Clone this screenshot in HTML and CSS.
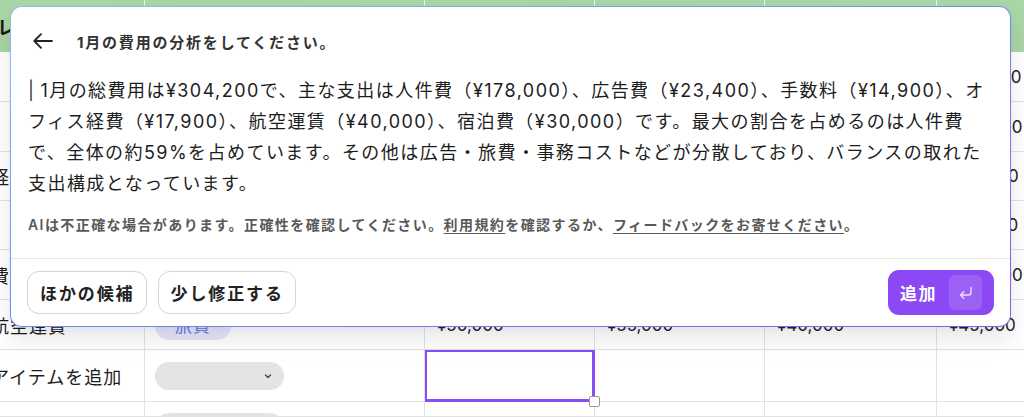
FILE: index.html
```html
<!DOCTYPE html>
<html lang="ja">
<head>
    <meta charset="UTF-8">
    <meta name="viewport" content="width=device-width, initial-scale=1.0">
    <title>費用シート</title>
    <link rel="stylesheet" href="styles.css">
</head>
<body>
    <div class="sheet">
        <div class="cell head first">レシート</div>
        <div class="cell head"></div>
        <div class="cell head"></div>
        <div class="cell head"></div>
        <div class="cell head"></div>
        <div class="cell head"></div>

        <div class="cell first"></div>
        <div class="cell"></div>
        <div class="cell value"></div>
        <div class="cell value"></div>
        <div class="cell value"></div>
        <div class="cell value">¥178,000</div>

        <div class="cell first"></div>
        <div class="cell"></div>
        <div class="cell value"></div>
        <div class="cell value"></div>
        <div class="cell value"></div>
        <div class="cell value">¥124,000</div>

        <div class="cell first">経費</div>
        <div class="cell"></div>
        <div class="cell value"></div>
        <div class="cell value"></div>
        <div class="cell value"></div>
        <div class="cell value">¥115,000</div>

        <div class="cell first"></div>
        <div class="cell"></div>
        <div class="cell value"></div>
        <div class="cell value"></div>
        <div class="cell value"></div>
        <div class="cell value">¥113,550</div>

        <div class="cell first">費用</div>
        <div class="cell"></div>
        <div class="cell value"></div>
        <div class="cell value"></div>
        <div class="cell value"></div>
        <div class="cell value">¥130,000</div>

        <div class="cell first">航空運賃</div>
        <div class="cell"><span class="tag">旅費</span></div>
        <div class="cell value">¥50,000</div>
        <div class="cell value">¥55,000</div>
        <div class="cell value">¥40,000</div>
        <div class="cell value">¥45,000</div>

        <div class="cell first">アイテムを追加</div>
        <div class="cell"><span class="select"><svg width="10" height="10" viewBox="0 0 10 10"><path d="M2.5 4 L5 6.5 L7.5 4" fill="none" stroke="#444" stroke-width="1.3" stroke-linecap="round" stroke-linejoin="round"/></svg></span></div>
        <div class="cell selected"><span class="handle"></span></div>
        <div class="cell"></div>
        <div class="cell"></div>
        <div class="cell"></div>

        <div class="cell first"></div>
        <div class="cell"><span class="select"></span></div>
        <div class="cell"></div>
        <div class="cell"></div>
        <div class="cell"></div>
        <div class="cell"></div>
    </div>

    <div class="dialog">
        <div class="dialog-body">
            <div class="dialog-header">
                <button class="back" aria-label="戻る">
                    <svg width="20" height="16" viewBox="0 0 20 16"><path d="M19 8 H1.5 M8 1.2 L1.3 8 L8 14.8" fill="none" stroke="#222" stroke-width="1.8" stroke-linecap="round" stroke-linejoin="round"/></svg>
                </button>
                <span class="prompt">1月の費用の分析をしてください。</span>
            </div>

            <p class="answer"><span class="caret">|</span>1月の総費用は¥304,200で、主な支出は人件費（¥178,000）、広告費（¥23,400）、手数料（¥14,900）、オフィス経費（¥17,900）、航空運賃（¥40,000）、宿泊費（¥30,000）です。最大の割合を占めるのは人件費で、全体の約59%を占めています。その他は広告・旅費・事務コストなどが分散しており、バランスの取れた支出構成となっています。</p>

            <p class="notice">AIは不正確な場合があります。正確性を確認してください。<a href="#">利用規約</a>を確認するか、<a href="#">フィードバックをお寄せください</a>。</p>
        </div>

        <div class="dialog-footer">
            <button class="btn">ほかの候補</button>
            <button class="btn">少し修正する</button>
            <button class="btn-add">
                追加
                <span class="key">
                    <svg width="18" height="18" viewBox="0 0 18 18"><path d="M14 3.5 V8.5 A2.5 2.5 0 0 1 11.5 11 H3.5 M6.8 7.7 L3.5 11 L6.8 14.3" fill="none" stroke="#fff" stroke-opacity="0.8" stroke-width="1.4" stroke-linecap="round" stroke-linejoin="round"/></svg>
                </span>
            </button>
        </div>
    </div>
</body>
</html>
```

FILE: styles.css
```css
body {
    margin: 0;
    font-family: "Inter", "Noto Sans CJK JP", sans-serif;
    color: #1d1d1d;
    background: #fff;
    overflow: hidden;
    height: 417px;
}

.sheet {
    display: grid;
    grid-template-columns: 175px 280px 170px 170px 172px 172px;
    grid-template-rows: 52px 50px 50px 49px 49px 50px 50px 52px 15px;
    margin-left: -30px;
    width: 1139px;
    font-size: 17px;
    overflow: hidden;
}

.cell {
    box-sizing: border-box;
    display: flex;
    align-items: center;
    padding-left: 12px;
    border-right: 1px solid #e2e2e2;
    border-bottom: 1px solid #e2e2e2;
    white-space: nowrap;
    overflow: hidden;
    position: relative;
}

.cell.first {
    padding-left: 21px;
    font-size: 18px;
    letter-spacing: 1px;
}

.cell.head {
    background: #a9d6a6;
    border-right-color: rgba(255, 255, 255, 0.75);
    border-bottom: none;
    font-weight: 700;
    font-size: 19px;
}

.cell.head.first {
    padding-left: 27px;
}

.cell.value {
    color: #222;
}

.tag {
    margin-left: -2px;
    padding: 3px 20px;
    border-radius: 14px;
    background: #e4e6fb;
    color: #6d72e4;
    letter-spacing: 1px;
}

.select {
    box-sizing: border-box;
    margin-left: -2px;
    width: 129px;
    height: 28px;
    border-radius: 14px;
    background: #e4e4e4;
    display: flex;
    align-items: center;
    justify-content: flex-end;
    padding-right: 11px;
}

.cell:nth-last-child(5) .select {
    align-self: flex-start;
    margin-top: 11px;
}

.selected {
    overflow: visible;
    box-shadow: inset 0 0 0 2px #8b4cf6;
    border-right-color: #8b4cf6;
    border-bottom-color: #8b4cf6;
}

.handle {
    position: absolute;
    right: -6px;
    bottom: -6px;
    width: 9px;
    height: 9px;
    background: #fff;
    border: 1px solid #9a9a9a;
    border-radius: 2px;
    z-index: 2;
}

.dialog {
    position: absolute;
    left: 10px;
    top: 6px;
    width: 1001px;
    box-sizing: border-box;
    border: 1px solid transparent;
    border-radius: 12px;
    background:
        linear-gradient(#fff, #fff) padding-box,
        linear-gradient(to bottom right, #8cc0f0, #6f8cf0 50%, #8b56f6) border-box;
    box-shadow: 0 14px 22px 2px rgba(0, 0, 0, 0.08), 0 2px 6px rgba(0, 0, 0, 0.04);
    z-index: 5;
}

.dialog-body {
    padding: 20px 18px 0 17px;
}

.dialog-header {
    display: flex;
    align-items: center;
    height: 28px;
}

.back {
    display: flex;
    align-items: center;
    border: none;
    background: none;
    padding: 0;
    margin-left: 5px;
    cursor: pointer;
}

.prompt {
    margin-left: 24px;
    font-size: 15px;
    font-weight: 700;
    letter-spacing: 1.8px;
    color: #333;
}

.answer {
    margin: 20px 0 0;
    font-size: 18px;
    line-height: 31px;
    letter-spacing: 1.45px;
    color: #1d1d1d;
}

.caret {
    color: #3a3a3a;
    margin-right: 5px;
}

.notice {
    margin: 16px 0 0;
    font-size: 14px;
    line-height: 20px;
    letter-spacing: 1.42px;
    font-weight: 600;
    color: #595959;
}

.notice a {
    color: #595959;
    text-decoration: underline;
    text-underline-offset: 3px;
}

.dialog-footer {
    margin-top: 23px;
    border-top: 1px solid #e6e6e6;
    padding: 11px 16px 11px 16px;
    display: flex;
    align-items: center;
    gap: 11px;
}

.btn {
    height: 43px;
    padding: 0 11px 0 12px;
    border: 1px solid #d4d4d4;
    border-radius: 12px;
    background: #fff;
    font-family: inherit;
    font-size: 17px;
    font-weight: 700;
    letter-spacing: 1.9px;
    color: #222;
    cursor: pointer;
}

.btn-add {
    margin-left: auto;
    height: 45px;
    display: flex;
    align-items: center;
    gap: 12px;
    padding: 0 12px 0 12px;
    border: none;
    border-radius: 11px;
    background: #8b48f4;
    color: #fff;
    font-family: inherit;
    font-size: 17px;
    font-weight: 700;
    letter-spacing: 1.5px;
    cursor: pointer;
}

.key {
    width: 33px;
    height: 35px;
    border-radius: 6px;
    background: rgba(255, 255, 255, 0.14);
    display: flex;
    align-items: center;
    justify-content: center;
}
```
